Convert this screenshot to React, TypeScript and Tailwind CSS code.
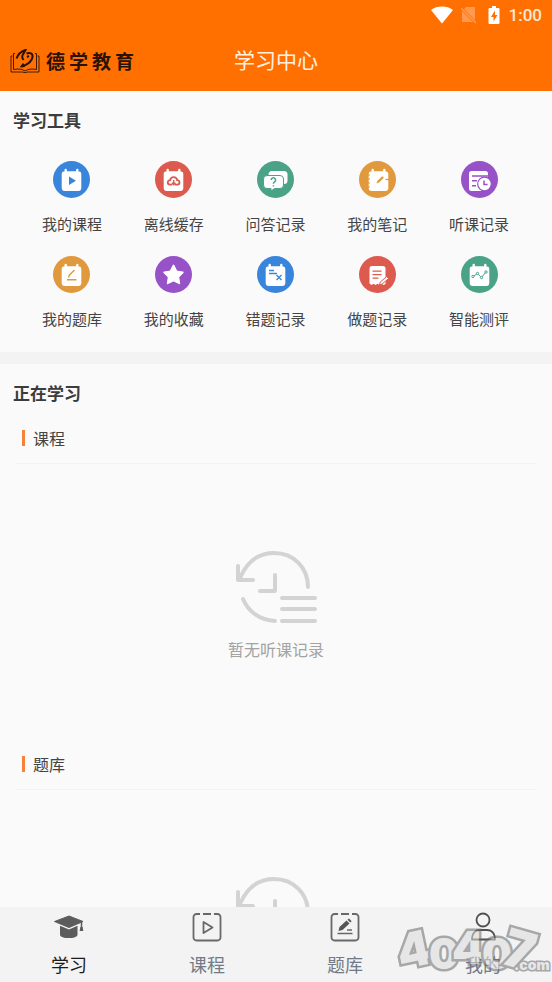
import type { ReactNode } from 'react';

type Tool = {
  label: string;
  color: string;
  glyph: ReactNode;
};

const PAD = 'M11.5 10.5V9a1 1 0 0 1 2.4 0v1.2h9.2V9a1 1 0 0 1 2.4 0v1.5H26a2.3 2.3 0 0 1 2.3 2.3V27a3 3 0 0 1-3 3H11.7a3 3 0 0 1-3-3V12.8a2.3 2.3 0 0 1 2.3-2.3z';

const tools: Tool[] = [
  {
    label: '我的课程',
    color: '#3a85dc',
    glyph: (
      <>
        <path d={PAD} fill="#fff" />
        <path d="M16 15.5V24l7-4.2z" fill="#3a85dc" />
      </>
    ),
  },
  {
    label: '离线缓存',
    color: '#dc5a4e',
    glyph: (
      <>
        <path d={PAD} fill="#fff" />
        <path
          d="M15 23.7a2.3 2.3 0 0 1 .2-4.6 3.5 3.5 0 0 1 6.9 0 2.3 2.3 0 0 1 .2 4.6H20M15 23.7h2.3"
          fill="none"
          stroke="#dc5a4e"
          strokeWidth="1.8"
        />
        <path d="M18.7 19v4M16.9 21.8l1.8 2 1.8-2" stroke="#dc5a4e" strokeWidth="1.4" fill="none" />
      </>
    ),
  },
  {
    label: '问答记录',
    color: '#4ba387',
    glyph: (
      <>
        <rect x="11.5" y="10" width="19" height="13" rx="3.5" fill="#fff" />
        <path
          d="M10 14.5h13a3.5 3.5 0 0 1 3.5 3.5v6a3.5 3.5 0 0 1-3.5 3.5h-5.5L14 30v-2.5h-4A3.5 3.5 0 0 1 6.5 24v-6a3.5 3.5 0 0 1 3.5-3.5z"
          fill="#fff"
          stroke="#4ba387"
        />
        <path d="M14.2 19a2.2 2.2 0 1 1 3.4 1.9c-.8.5-1.2.9-1.2 1.9M16.4 24.3v1.3" stroke="#4ba387" strokeWidth="1.5" fill="none" />
      </>
    ),
  },
  {
    label: '我的笔记',
    color: '#e1993d',
    glyph: (
      <>
        <path d={PAD} fill="#fff" transform="translate(1)" />
        <path d="M8.5 14H11M8.5 18H11M8.5 22H11M8.5 26H11" stroke="#e1993d" />
        <path d="m17.5 22.5.8-2.6 5-4.7 1.6 1.6-4.9 4.8z" fill="#e1993d" />
        <path d="M26.5 18.5H30" stroke="#e1993d" strokeWidth="1.3" />
      </>
    ),
  },
  {
    label: '听课记录',
    color: '#9652c6',
    glyph: (
      <>
        <rect x="8" y="10" width="19" height="20" rx="2.5" fill="#fff" />
        <path d="M11 15h16M11 19.8h5M11 24.8h4" stroke="#9652c6" strokeWidth="1.5" />
        <circle cx="23.5" cy="23" r="6.8" fill="#fff" stroke="#9652c6" strokeWidth="1.2" />
        <path d="M23 19.5v4h3.6" stroke="#9652c6" strokeWidth="1.5" fill="none" />
      </>
    ),
  },
  {
    label: '我的题库',
    color: '#e1993d',
    glyph: (
      <>
        <path d={PAD} fill="#fff" />
        <path d="m15.5 21.5 1-2.5 5-5M14 23.7h9.5" stroke="#e1993d" strokeWidth="1.4" fill="none" />
      </>
    ),
  },
  {
    label: '我的收藏',
    color: '#9652c6',
    glyph: (
      <path
        d="m18.5 9.5 3 5.8 6.3 1-4.5 4.6 1 6.4-5.8-2.9-5.8 2.9 1-6.4-4.5-4.6 6.3-1z"
        fill="#fff"
        stroke="#fff"
        strokeWidth="1.8"
        strokeLinejoin="round"
      />
    ),
  },
  {
    label: '错题记录',
    color: '#3a85dc',
    glyph: (
      <>
        <path d={PAD} fill="#fff" />
        <path d="M12 14.5h5M12 17.5h8M19.5 19l5 5M24.5 19l-5 5" stroke="#3a85dc" strokeWidth="1.4" />
      </>
    ),
  },
  {
    label: '做题记录',
    color: '#dc5a4e',
    glyph: (
      <>
        <path
          d="M12.5 10H24a2.5 2.5 0 0 1 2.5 2.5V28l-2 1-2-1.2-2 1.2-2-1.2-2 1.2-2-1.2-2 1.2-2-1.5V12.500a2.5 2.5 0 0 1 2.5-2.5z"
          fill="#fff"
        />
        <path d="M13.5 15.2h9M13.5 18.7h9M13.5 22.2h6" stroke="#dc5a4e" strokeWidth="1.3" />
        <path d="m20.3 29 1-3 6.5-5.5 1.700 2-6.5 5.700z" fill="#fff" stroke="#dc5a4e" />
      </>
    ),
  },
  {
    label: '智能测评',
    color: '#4ba387',
    glyph: (
      <>
        <path d={PAD} fill="#fff" />
        <g stroke="#4ba387" fill="#fff">
          <path d="m12 20.5 4.500-3 4 4 4.500-5.500" />
          <circle cx="12" cy="20.5" r="1.2" />
          <circle cx="16.5" cy="17.5" r="1.2" />
          <circle cx="20.5" cy="21.5" r="1.2" />
          <circle cx="25" cy="16" r="1.2" />
        </g>
      </>
    ),
  },
];

const tabs = [
  {
    label: '学习',
    icon: (
      <svg viewBox="0 0 32 32" className="size-8">
        <path d="M16 5 1.5 10.5 16 16.5l14-6z" fill="#5c5c5c" stroke="#5c5c5c" strokeLinejoin="round" />
        <path d="M7 14.700v9c0 4.500 17.500 4.500 17.500 0v-9L16 18.500z" fill="#5c5c5c" />
        <path d="M28.500 11v6.500" stroke="#5c5c5c" strokeWidth="1.5" />
        <path d="M27.300 16h2.400l.6 4h-3.600z" fill="#5c5c5c" />
      </svg>
    ),
  },
  {
    label: '课程',
    icon: (
      <svg viewBox="0 0 32 32" className="size-8" fill="none" stroke="#686868" strokeWidth="1.8">
        <path d="M9 3H5.500A3 3 0 0 0 2.500 6v20.500a3 3 0 0 0 3 3h21a3 3 0 0 0 3-3V6a3 3 0 0 0-3-3H23M12 3h8" />
        <path d="M12.500 11v11l9-5.500z" strokeLinejoin="round" />
      </svg>
    ),
  },
  {
    label: '题库',
    icon: (
      <svg viewBox="0 0 32 32" className="size-8" fill="none" stroke="#686868" strokeWidth="1.8">
        <path d="M9 3H5.500A3 3 0 0 0 2.500 6v20.500a3 3 0 0 0 3 3h21a3 3 0 0 0 3-3V6a3 3 0 0 0-3-3H23M12 3h8" />
        <path d="m9.500 20 1-4 7-6.500 3 3-7 6.500z" fill="#555" stroke="none" />
        <path d="m18.500 8.700 1.500-1.200 2.600 2.700-1.300 1.300z" fill="#555" stroke="none" />
        <path d="M8.500 22.500h15M18 19h5" strokeWidth="1.4" />
      </svg>
    ),
  },
  {
    label: '我的',
    icon: (
      <svg viewBox="0 0 32 32" className="size-8" fill="none" stroke="#505050" strokeWidth="1.8">
        <circle cx="16" cy="9" r="6.5" />
        <path d="M5 28.500c0-7 4-9.500 8-9.500h7c4 0 8 2.500 8 9.500z" strokeLinejoin="round" />
      </svg>
    ),
  },
];

function Logo() {
  return (
    <div className="flex items-center gap-[6px] text-[#2b1206]">
      <svg viewBox="0 0 30 24" className="h-6 w-[30px]" fill="none" stroke="currentColor">
        <path d="M5 4.500H3.500v16c5-1 8.500-.5 11.500 1.500 3-2 6.500-2.500 11.500-1.500v-16H25" strokeWidth=".9" />
        <path d="M2.500 7H1v16h11.500l2.500.7 2.500-.7H29V7h-1.500" strokeWidth=".9" />
        <path d="M6.500 9.500C8 5 11 2.500 15.500 1L13 5.500c-1.500 2-1 3.500.5 5.500" strokeWidth="2" />
        <path d="M16.500 4.500c3.500-1.500 6.500 0 6 3.500-.5 4-5 7.500-10.500 9.500M17 8l2-1" strokeWidth="2" />
        <path d="m10.500 18 2.500-3.500 1.500 3z" fill="currentColor" />
      </svg>
      <span className="flex gap-1 text-[19px] leading-6 font-bold">
        {[...'德学教育'].map((char) => (
          <span key={char}>{char}</span>
        ))}
      </span>
    </div>
  );
}

function StatusBar() {
  return (
    <div className="flex h-[30px] items-center justify-end pr-[10px] text-[#ffe9d6]">
      <svg viewBox="0 0 22 18" className="mr-2 h-[18px] w-[22px]">
        <path d="M0 4C6-.6 16-.6 22 4L11 17.500z" fill="#fff" />
      </svg>
      <svg viewBox="0 0 16 18" className="mr-[10px] h-[18px] w-4">
        <path d="M5 1h9v13L3 3zM1 5v11h11z" fill="#ff9a50" />
        <path d="m0 2 15 15" stroke="#ff9a50" strokeWidth="1.4" />
      </svg>
      <svg viewBox="0 0 14 18" className="mr-2 h-[18px] w-[14px]">
        <path d="M5 0h4v2h2.500a1 1 0 0 1 1 1v14a1 1 0 0 1-1 1h-9a1 1 0 0 1-1-1V3a1 1 0 0 1 1-1H5z" fill="#fff" />
        <path d="M8 4.500 4 11h2.500v4.500l4-6.500H8z" fill="#ff7000" />
      </svg>
      <span className="font-[Roboto,sans-serif] text-[17px] leading-5 font-medium">1:00</span>
    </div>
  );
}

function StudySection({ title, emptyText }: { title: string; emptyText?: string }) {
  return (
    <section>
      <div className="mx-[15px] flex items-center gap-2 border-b border-[#f3f3f3] pb-[13px] pl-[7px]">
        <span className="h-4 w-[3px] bg-[#f58238]" />
        <h3 className="text-base leading-6 text-[#444]">{title}</h3>
      </div>
      <div className="flex flex-col items-center gap-[14px] pt-[87px] pb-[91px]">
        <svg
          viewBox="0 0 82 72"
          className="h-[72px] w-[82px]"
          fill="none"
          stroke="#d3d3d3"
          strokeWidth="4"
          strokeLinecap="round"
          strokeLinejoin="round"
        >
          <path d="M5 27C13 8 26 2 39 2c20 0 34 15 34 34M8 48c5 12 16 21 32 22" />
          <path d="M3 15v14h15M40 24v16H25M47 47h33M47 58h33M47 70h33" />
        </svg>
        {emptyText ? <p className="text-base leading-6 text-[#a3a3a3]">{emptyText}</p> : null}
      </div>
    </section>
  );
}

function Watermark() {
  return (
    <svg
      viewBox="0 0 160 70"
      className="pointer-events-none absolute right-0 bottom-0 h-[70px] w-40 overflow-visible font-[Inter,sans-serif] font-black opacity-55"
      fill="#dcdcdc"
      stroke="#6a6a6a"
      strokeWidth="5"
      strokeLinejoin="miter"
      paintOrder="stroke"
    >
      <text x="5" y="55" fontSize="48" transform="rotate(-12 20 38)">4</text>
      <text x="37" y="57" fontSize="42">0</text>
      <text x="60" y="52" fontSize="46">4</text>
      <text x="90" y="57" fontSize="42">0</text>
      <text x="112" y="57" fontSize="52" transform="rotate(16 130 38)">7</text>
      <text x="122" y="58" fontSize="14" strokeWidth="3">.com</text>
    </svg>
  );
}

export default function App() {
  return (
    <div className="flex h-screen flex-col bg-[#fafafa] font-['Noto_Sans_CJK_SC',sans-serif]">
      <header className="shrink-0 bg-[#ff7000]">
        <StatusBar />
        <div className="grid h-[61px] grid-cols-3 items-center px-[10px]">
          <Logo />
          <h1 className="pb-1 text-center text-[21px] leading-7 text-[#fff0e0]">学习中心</h1>
        </div>
      </header>

      <main className="min-h-0 flex-1 overflow-y-auto [scrollbar-width:none]">
        <section className="pt-[17px] pb-[21px]">
          <h2 className="px-[13px] text-[17px] leading-6 font-bold text-[#3c3c3c]">学习工具</h2>
          <div className="mt-[29px] grid grid-cols-5 gap-y-5 pr-[22px] pl-[21px]">
            {tools.map((tool) => (
              <button key={tool.label} type="button" className="flex flex-col items-center gap-[14px]">
                <svg viewBox="0 0 37 37" className="size-[37px]">
                  <circle cx="18.5" cy="18.5" r="18.5" fill={tool.color} />
                  {tool.glyph}
                </svg>
                <span className="text-[15px] leading-6 text-[#444]">{tool.label}</span>
              </button>
            ))}
          </div>
        </section>

        <div className="h-3 bg-[#f3f3f3]" />

        <h2 className="mb-[21px] px-[13px] pt-[17px] text-[17px] leading-6 font-bold text-[#3c3c3c]">正在学习</h2>
        <StudySection title="课程" emptyText="暂无听课记录" />
        <StudySection title="题库" />
      </main>

      <nav className="relative grid shrink-0 grid-cols-4 bg-[#f3f3f3] py-1">
        {tabs.map((tab, i) => (
          <button key={tab.label} type="button" aria-current={i === 0 ? 'page' : undefined} className="flex flex-col items-center gap-[7px]">
            {tab.icon}
            <span className={i === 0 ? 'text-lg leading-7 text-[#1c1c1c]' : 'text-lg leading-7 text-[#727a86]'}>{tab.label}</span>
          </button>
        ))}
        <Watermark />
      </nav>
    </div>
  );
}
